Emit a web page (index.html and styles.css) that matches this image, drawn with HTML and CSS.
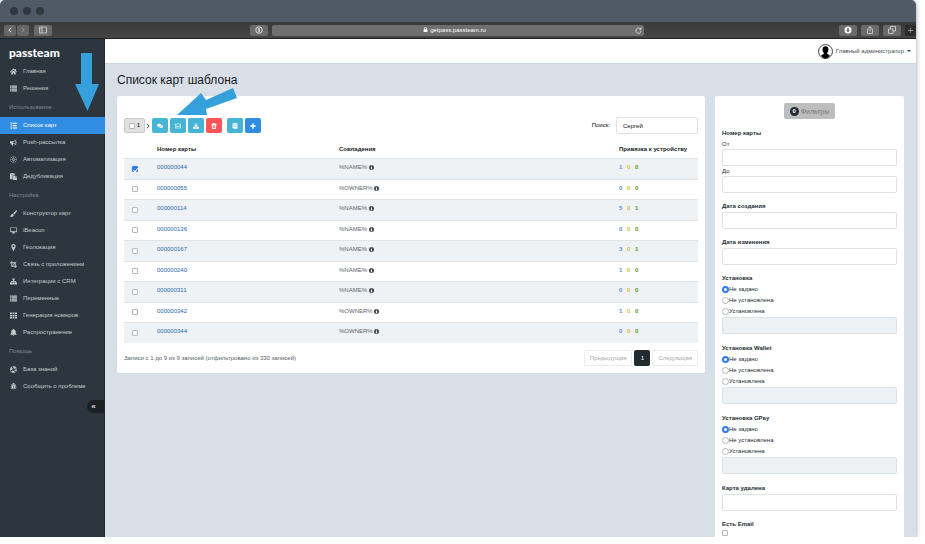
FILE: index.html
```html
<!DOCTYPE html>
<html lang="ru">
<head>
<meta charset="utf-8">
<title>Список карт шаблона</title>
<link rel="stylesheet" href="styles.css">
</head>
<body>
<svg class="sprite" aria-hidden="true">
  <symbol id="home" viewBox="0 0 16 16"><path d="M8 1 0 8.500 1.500 10 8 4l6.500 6L16 8.500l-2.500-2.500V2h-2v2zM8 5.500 3 10v5h4v-4h2v4h4v-5z"/></symbol>
  <symbol id="list" viewBox="0 0 16 16"><path d="M0 1h3v3H0zM4 1h12v3H4zM0 5h3v2.500H0zM4 5h12v2.500H4zM0 8.500h3V11H0zM4 8.500h12V11H4zM0 12h3v3H0zM4 12h12v3H4z"/></symbol>
  <symbol id="ordered" viewBox="0 0 16 16"><path d="M6 1.500h10v2.500H6zM6 7h10v2.500H6zM6 12.500h10V15H6zM2 0h1.500v4h1v1H1V4h1V2H1zM1 6h3v2L2.500 10H4v1H1v-1l2-2V7H1zM1 12h3v4H1v-1h2v-.5H2v-1h1V13H1z"/></symbol>
  <symbol id="horn" viewBox="0 0 16 16"><path fill-rule="evenodd" d="M0 5h6c3 0 6-2 8-4v5c2 0 2 3 0 3v5c-2-2-4-3.500-7-4-1 2 0 3 1 4-1 1-3 1-4 0-1-2-1-3-1-4H1L0 9zm7 1.500v2c2 .5 4 1.500 5.500 2.800v-7.500C11 5 9 6 7 6.500z"/></symbol>
  <symbol id="auto" viewBox="0 0 16 16"><g fill="none" stroke="currentColor"><circle cx="8" cy="8" r="7" stroke-dasharray="3 1"/><circle cx="8" cy="8" r="2"/><path d="M8 1v5M8 10v5M1 8h5M10 8h5M3 3l3.500 3.500M9.500 9.500 13 13M13 3 9.500 6.500M6.500 9.500 3 13"/></g></symbol>
  <symbol id="paste" viewBox="0 0 16 16"><path fill-rule="evenodd" d="M0 1h3l1-1h3l1 1h3v4H6v9H0zm3 1v1h5V2zM7 6h5v4h4v6H7zm6 0 3 3h-3z"/></symbol>
  <symbol id="brush" viewBox="0 0 16 16"><path d="M15.500.5c1 1 .5 2-.5 3.500L9.500 11 7 8.500 13 1.500c1-1 2-1.500 2.500-1zM6 9l2.500 2.500C9 14 6 16 3 16c-2 0-3-2-3-3 2 1 2 0 3-2s2-2 3-2z"/></symbol>
  <symbol id="monitor" viewBox="0 0 16 16"><path fill-rule="evenodd" d="M1 1h14l1 1v9l-1 1h-5l1 2v1H5v-1l1-2H1l-1-1V2zm.5 1.500v7h13v-7z"/></symbol>
  <symbol id="pin" viewBox="0 0 16 16"><path fill-rule="evenodd" d="M8 0c3 0 5 2 5 5 0 2-1 3-4 10.500H7C4 8 3 7 3 5c0-3 2-5 5-5zm0 3a2 2 0 1 0 0 4.500A2 2 0 0 0 8 3z"/></symbol>
  <symbol id="crop" viewBox="0 0 16 16"><path d="M3 0h2v3h7l2-2 1 1-2 2v7h3v2h-3v3h-2v-3H3V5H0V3h3zm2 5v5l5-5zm6 1-5 5h5z"/></symbol>
  <symbol id="sitemap" viewBox="0 0 16 16"><path d="M5.500 1h5v4H9v2h5v3h2v5h-5v-5h1.500V8.500H9V10h1.500v5h-5v-5H7V8.500H3.500V10H5v5H0v-5h2V7h5V5H5.500z"/></symbol>
  <symbol id="grid" viewBox="0 0 16 16"><path d="M0 1h4.500v3.500H0zM6 1h4v3.500H6zM11.500 1H16v3.500h-4.500zM0 6h4.500v3.500H0zM6 6h4v3.500H6zM11.500 6H16v3.500h-4.500zM0 11h4.500v4H0zM6 11h4v4H6zM11.500 11H16v4h-4.500z"/></symbol>
  <symbol id="bell" viewBox="0 0 16 16"><path d="M7 1V0h2v1c3 .5 4 2.500 4 5 0 4 1 5 3 7H0c2-2 3-3 3-7 0-2.500 1-4.500 4-5zM6 14h4c0 2.500-4 2.500-4 0z"/></symbol>
  <symbol id="ring" viewBox="0 0 16 16"><g fill="none" stroke="currentColor"><circle cx="8" cy="8" r="5.500" stroke-width="4" stroke-dasharray="5.600 3.040" stroke-dashoffset="2.800"/><circle cx="8" cy="8" r="7.300"/><circle cx="8" cy="8" r="3.500"/></g></symbol>
  <symbol id="bug" viewBox="0 0 16 16"><path d="M5 4c0-5 6-5 6 0zM3 3l2 2h6l2-2 1 1-2 2v2h3v1.500h-3l-.3 1.500L14 13l-1 1-2-2c-1 1.500-2 2-2.500 2V7h-1v7c-.5 0-1.500-.5-2.500-2l-2 2-1-1 2.300-2L4 9.500H1V8h3V6L2 4z"/></symbol>
  <symbol id="chat" viewBox="0 0 16 16"><path d="M6 2c3.500 0 6 1.800 6 4s-2.500 4-6 4l-1.500-.2L1.500 11l1-2C1 8.300 0 7.300 0 6c0-2.200 2.500-4 6-4zM13 5.500c4 1.500 4 5 1 6.500l1 2-3-1c-3 .3-5-.5-6-1.800 4 .3 7.500-2 7-5.700z"/></symbol>
  <symbol id="mail" viewBox="0 0 16 16"><path fill="none" stroke="currentColor" stroke-width="1.500" d="M1 2.500h14v11H1zM1 5l7 5 7-5M1 13l5-4M15 13l-5-4"/></symbol>
  <symbol id="load" viewBox="0 0 16 16"><path d="M6.500 1h3v5H13l-5 5-5-5h3.500zM0 10h4l2 2h4l2-2h4v5H0z"/></symbol>
  <symbol id="trash" viewBox="0 0 16 16"><path fill-rule="evenodd" d="M5 2 6 0h4l1 2h4v2h-1l-1 12H3L2 4H1V2zm0 4v7h1.500V6zm2.300 0v7h1.500V6zm2.300 0v7H11V6z"/></symbol>
  <symbol id="db" viewBox="0 0 16 16"><path d="M1 2c0-2.500 14-2.500 14 0v1.500C15 5 1 5 1 3.500zM1 5c3 1.500 11 1.500 14 0v3c-2 1.500-12 1.500-14 0zM1 9.500c3 1.500 11 1.500 14 0v4c0 3-14 3-14 0z"/></symbol>
  <symbol id="plus" viewBox="0 0 16 16"><path d="M6 1h4v5h5v4h-5v5H6v-5H1V6h5z"/></symbol>
  <symbol id="info" viewBox="0 0 16 16"><path fill-rule="evenodd" d="M8 0a8 8 0 1 1 0 16A8 8 0 0 1 8 0zM6.500 2.500v2.500h3V2.500zM5.500 6.500V8h1v4h-1v1.500h5V12h-1V6.500z"/></symbol>
  <symbol id="back" viewBox="0 0 16 16"><path fill="none" stroke="currentColor" stroke-width="2.500" d="M11 2 5 8l6 6"/></symbol>
  <symbol id="forward" viewBox="0 0 16 16"><path fill="none" stroke="currentColor" stroke-width="2.500" d="m5 2 6 6-6 6"/></symbol>
</svg>

<div class="window">
  <div class="titlebar"><i></i><i></i><i></i></div>
  <div class="toolbar">
    <div class="tool-left">
      <div class="history"><button aria-label="Назад"><svg><use href="#back"/></svg></button><button class="dim" aria-label="Вперёд"><svg><use href="#forward"/></svg></button></div>
      <button class="tool" aria-label="Боковая панель"><svg class="wide" viewBox="0 0 16 16"><path fill="none" stroke="currentColor" stroke-width="1.500" d="M1 2h14v12H1zM6 2v12M3 5h2M3 8h2"/></svg></button>
      <button class="tool push" aria-label="Пароли"><svg class="wide" viewBox="0 0 16 16"><circle cx="8" cy="8" r="6.500" fill="none" stroke="currentColor" stroke-width="2"/><path d="M6.500 4h3v8h-3z"/></svg></button>
    </div>
    <div class="address">
      <span><svg class="lock" viewBox="0 0 16 16"><path fill-rule="evenodd" d="M3 7V5c0-6 10-6 10 0v2h1v9H2V7zm2 0h6V5c0-3-6-3-6 0z"/></svg>getpass.passteam.ru</span>
      <svg class="reload" viewBox="0 0 16 16"><path fill="none" stroke="currentColor" stroke-width="1.500" d="M13 5a6 6 0 1 0 1 4M14 1v4h-4"/></svg>
    </div>
    <div class="tool-right">
      <button class="tool" aria-label="Загрузки"><svg class="wide" viewBox="0 0 16 16"><path fill="#fff" fill-rule="evenodd" d="M8 1a7 7 0 1 1 0 14A7 7 0 0 1 8 1zM6.500 4v4H4l4 5 4-5H9.500V4z"/></svg></button>
      <button class="tool" aria-label="Поделиться"><svg class="wide" viewBox="0 0 16 16"><path fill="none" stroke="currentColor" stroke-width="1.500" d="M6 6H3v9h10V6h-3M8 11V1M5 4l3-3 3 3"/></svg></button>
      <button class="tool" aria-label="Вкладки"><svg class="wide" viewBox="0 0 16 16"><path fill="none" stroke="currentColor" stroke-width="1.500" d="M1 6h9v9H1zM5 6V1h10v9h-5"/></svg></button>
      <button class="newtab" aria-label="Новая вкладка">+</button>
    </div>
  </div>

  <div class="app">
    <aside class="sidebar">
      <a class="logo" href="#">passteam</a>
      <nav>
        <a href="#"><svg><use href="#home"/></svg>Главная</a>
        <a href="#"><svg><use href="#list"/></svg>Решения</a>
        <h2>Использование</h2>
        <a class="active" href="#"><svg><use href="#ordered"/></svg>Список карт</a>
        <a href="#"><svg><use href="#horn"/></svg>Push-рассылка</a>
        <a href="#"><svg><use href="#auto"/></svg>Автоматизация</a>
        <a href="#"><svg><use href="#paste"/></svg>Дедубликация</a>
        <h2>Настройка</h2>
        <a href="#"><svg><use href="#brush"/></svg>Конструктор карт</a>
        <a href="#"><svg><use href="#monitor"/></svg>iBeacon</a>
        <a href="#"><svg><use href="#pin"/></svg>Геолокация</a>
        <a href="#"><svg><use href="#crop"/></svg>Связь с приложением</a>
        <a href="#"><svg><use href="#sitemap"/></svg>Интеграции с CRM</a>
        <a href="#"><svg><use href="#list"/></svg>Переменные</a>
        <a href="#"><svg><use href="#grid"/></svg>Генерация номеров</a>
        <a href="#"><svg><use href="#bell"/></svg>Распространение</a>
        <h2>Помощь</h2>
        <a href="#"><svg><use href="#ring"/></svg>База знаний</a>
        <a href="#"><svg><use href="#bug"/></svg>Сообщить о проблеме</a>
      </nav>
      <button class="collapse" aria-label="Свернуть меню">«</button>
    </aside>

    <div class="main">
      <header class="topbar">
        <a class="user" href="#">
          <svg class="avatar" viewBox="0 0 28 28"><circle cx="14" cy="14" r="13" fill="#fff" stroke="#111" stroke-width="1.500"/><path d="M14 4c4 0 6 3 5.500 7 0 3-1.500 4-2.500 6 0 2 1 2.500 5 4-2 4-5 6-8 6s-6-2-8-6c4-1.500 5-2 5-4-1-2-2.500-3-2.500-6C8 7 10 4 14 4z"/></svg>
          Главный администратор<i class="caret"></i>
        </a>
      </header>
      <h1>Список карт шаблона</h1>
      <div class="columns">
        <section class="panel cards">
          <div class="actions">
            <label class="picked"><input type="checkbox">1</label>
            <svg class="chevron"><use href="#forward"/></svg>
            <div class="buttons">
              <button aria-label="Сообщение"><svg><use href="#chat"/></svg></button>
              <button aria-label="Письмо"><svg><use href="#mail"/></svg></button>
              <button aria-label="Скачать"><svg><use href="#load"/></svg></button>
              <button class="danger" aria-label="Удалить"><svg><use href="#trash"/></svg></button>
            </div>
            <div class="buttons">
              <button aria-label="Данные"><svg><use href="#db"/></svg></button>
              <button class="primary" aria-label="Добавить"><svg><use href="#plus"/></svg></button>
            </div>
            <label class="search">Поиск:<input type="text" value="Сергей"></label>
          </div>
          <table>
            <colgroup><col class="c-check"><col class="c-number"><col><col class="c-device"></colgroup>
            <thead><tr><th></th><th>Номер карты</th><th>Совпадения</th><th>Привязка к устройству</th></tr></thead>
            <tbody>
              <tr><td><input type="checkbox" aria-label="000000044" checked></td><td><a href="#">000000044</a></td><td>%NAME% <svg><use href="#info"/></svg></td><td><b>1</b><b>0</b><b>0</b></td></tr>
              <tr><td><input type="checkbox" aria-label="000000055"></td><td><a href="#">000000055</a></td><td>%OWNER% <svg><use href="#info"/></svg></td><td><b>0</b><b>0</b><b>0</b></td></tr>
              <tr><td><input type="checkbox" aria-label="000000114"></td><td><a href="#">000000114</a></td><td>%NAME% <svg><use href="#info"/></svg></td><td><b>5</b><b>0</b><b>1</b></td></tr>
              <tr><td><input type="checkbox" aria-label="000000136"></td><td><a href="#">000000136</a></td><td>%NAME% <svg><use href="#info"/></svg></td><td><b>0</b><b>0</b><b>0</b></td></tr>
              <tr><td><input type="checkbox" aria-label="000000167"></td><td><a href="#">000000167</a></td><td>%NAME% <svg><use href="#info"/></svg></td><td><b>3</b><b>0</b><b>1</b></td></tr>
              <tr><td><input type="checkbox" aria-label="000000240"></td><td><a href="#">000000240</a></td><td>%NAME% <svg><use href="#info"/></svg></td><td><b>1</b><b>0</b><b>0</b></td></tr>
              <tr><td><input type="checkbox" aria-label="000000311"></td><td><a href="#">000000311</a></td><td>%NAME% <svg><use href="#info"/></svg></td><td><b>0</b><b>0</b><b>0</b></td></tr>
              <tr><td><input type="checkbox" aria-label="000000342"></td><td><a href="#">000000342</a></td><td>%OWNER% <svg><use href="#info"/></svg></td><td><b>1</b><b>0</b><b>0</b></td></tr>
              <tr><td><input type="checkbox" aria-label="000000344"></td><td><a href="#">000000344</a></td><td>%OWNER% <svg><use href="#info"/></svg></td><td><b>0</b><b>0</b><b>0</b></td></tr>
            </tbody>
          </table>
          <div class="summary">
            <span>Записи с 1 до 9 из 9 записей (отфильтровано из 330 записей)</span>
            <div class="pages"><button>Предыдущая</button><button class="current">1</button><button>Следующая</button></div>
          </div>
        </section>

        <form class="panel filters">
          <button type="button" class="apply"><span>0</span>Фильтры</button>
          <fieldset>
            <legend>Номер карты</legend>
            <label for="from">От</label><input type="text" id="from">
            <label for="to">До</label><input type="text" id="to">
          </fieldset>
          <div class="field"><label for="created">Дата создания</label><input type="text" id="created"></div>
          <div class="field"><label for="changed">Дата изменения</label><input type="text" id="changed"></div>
          <fieldset class="state">
            <legend>Установка</legend>
            <label><input type="radio" name="install" checked>Не задано</label>
            <label><input type="radio" name="install">Не установлена</label>
            <label><input type="radio" name="install">Установлена</label>
            <input type="text" aria-label="Дата установки" disabled>
          </fieldset>
          <fieldset class="state">
            <legend>Установка Wallet</legend>
            <label><input type="radio" name="wallet" checked>Не задано</label>
            <label><input type="radio" name="wallet">Не установлена</label>
            <label><input type="radio" name="wallet">Установлена</label>
            <input type="text" aria-label="Дата установки Wallet" disabled>
          </fieldset>
          <fieldset class="state">
            <legend>Установка GPay</legend>
            <label><input type="radio" name="gpay" checked>Не задано</label>
            <label><input type="radio" name="gpay">Не установлена</label>
            <label><input type="radio" name="gpay">Установлена</label>
            <input type="text" aria-label="Дата установки GPay" disabled>
          </fieldset>
          <div class="field"><label for="removed">Карта удалена</label><input type="text" id="removed"></div>
          <div class="field"><label for="email">Есть Email</label><input type="checkbox" id="email"></div>
        </form>
      </div>
    </div>
  </div>
  <svg class="pointer down" viewBox="0 0 24 58"><path d="M6 0h11v31h7L12.500 58 0 31h6z"/></svg>
  <svg class="pointer left" viewBox="0 0 60 28"><path d="M0 27 24 5l5 7L56 0l4 10-31 11 1 6z"/></svg>
</div>
</body>
</html>
```
FILE: styles.css
```css
* { box-sizing: border-box; }
body { margin: 0; overflow: hidden; background: #fff; font: 6px/11px "Liberation Sans", Arial, sans-serif; color: #343c44; }
button, input { font: inherit; color: inherit; margin: 0; padding: 0; border: 0; }
a { color: inherit; text-decoration: none; }
svg { width: 6px; height: 6px; flex: none; fill: currentColor; }
.sprite { display: none; }

.window { position: relative; display: flex; flex-direction: column; height: calc(100vh - 7px); margin-right: 9px; overflow: clip; border-radius: 5px 5px 0 0; background: #d9dfe7; box-shadow: 0 1px 5px rgba(0, 0, 0, .4); }
.titlebar { display: flex; gap: 5px; align-items: center; height: 22px; padding-left: 10px; flex: none; background: #505966; }
.titlebar i { width: 8px; height: 8px; border-radius: 50%; background: #2f3741; }
.toolbar { display: flex; align-items: center; height: 17px; flex: none; background: linear-gradient(#3a3a3b, #454546); border-bottom: 1px solid #222; color: #d8d8d8; }
.tool-left { display: flex; width: 268px; padding-left: 4px; gap: 5px; }
.history { display: flex; gap: 1px; }
.toolbar button { display: flex; align-items: center; justify-content: center; width: 18px; height: 11px; border-radius: 2px; background: #6a6a6b; color: #ddd; }
.toolbar .history button { width: 12px; background: #666667; color: #fff; }
.toolbar .history .dim { color: #999; }
.toolbar .push { margin-left: auto; }
.wide { width: 8px; height: 8px; }
.address { display: flex; align-items: center; flex: 0 0 372px; height: 11px; margin-left: 4px; padding: 0 2px; border-radius: 2px; background: #6f6f70; color: #fff; }
.address span { flex: 1; text-align: center; }
.lock { width: 5px; height: 5px; margin-right: 2px; }
.reload { width: 7px; height: 7px; }
.tool-right { display: flex; align-items: center; flex: 1; gap: 4px; justify-content: flex-end; }
.toolbar .newtab { align-self: flex-end; width: 11px; height: 11px; border-radius: 0; background: #2b2b2c; color: #999; font-size: 10px; }

.app { display: flex; flex: 1; min-height: 0; }
.sidebar { display: flex; flex-direction: column; flex: 0 0 105px; background: #2d363e; border-right: 1px solid #222a31; color: #c5cacd; }
.logo { height: 24px; padding: 2px 0 0 9px; color: #fff; font: 900 12px/23px Lato, sans-serif; }
.sidebar nav a { display: flex; align-items: center; gap: 6px; height: 17px; padding-left: 10px; }
.sidebar nav svg { width: 7px; height: 7px; }
.sidebar nav .active { background: #318de3; color: #fff; margin-right: -1px; }
.sidebar h2 { margin: 0; padding-left: 9px; font-size: 6px; font-weight: 400; line-height: 20px; color: #7e8890; }
.collapse { align-self: flex-end; width: 17px; height: 13px; margin-top: 5px; padding-right: 4px; border-radius: 7px 0 0 7px; background: #1b2025; color: #ddd; font-size: 8px; font-weight: 700; line-height: 11px; }

.main { flex: 1; min-width: 0; background: #d9dfe7; }
.topbar { display: flex; justify-content: flex-end; height: 25px; padding-right: 5px; background: #fff; border-bottom: 1px solid #cfd5dc; }
.user { display: flex; align-items: center; gap: 3px; color: #454b55; }
.avatar { width: 15px; height: 15px; fill: #000; }
.caret { border: 2px solid transparent; border-top-color: #333b48; border-bottom: 0; }
h1 { margin: 0; padding: 8px 12px; font-size: 12px; font-weight: 400; line-height: 16px; color: #161c24; -webkit-text-stroke: thin; -webkit-text-stroke-width: 0; }
.columns { display: flex; align-items: flex-start; gap: 10px; padding: 0 12px; }
.panel { background: #fff; border-radius: 2px; }
.cards { flex: 1; min-width: 0; padding: 21px 7px 7px; }

.actions { display: flex; align-items: center; height: 17px; }
.picked { display: flex; align-items: center; justify-content: center; gap: 2px; width: 21px; height: 15px; border: 1px solid #ccc; border-radius: 2px; background: #e1e1e1; font-weight: 700; }
.chevron { margin-right: 1px; }
.buttons { display: flex; gap: 2px; margin-right: 5px; }
.buttons button { display: flex; align-items: center; justify-content: center; width: 16px; height: 15px; border-radius: 2px; background: #46b4d5; color: #fff; }
.buttons .danger { background: #fb5557; }
.buttons .primary { background: #318de3; }
.search { display: flex; align-items: center; gap: 6px; margin-left: auto; color: #111; }
.search input { width: 82px; padding: 0 6px; }
input[type="text"] { height: 17px; border: 1px solid #dfe2e5; border-radius: 2px; background: #fff; }
input[type="text"]:disabled { background: #edf1f4; }
input[type="checkbox"] { appearance: none; display: block; width: 6px; height: 6px; border: 1px solid #b5b8bb; border-radius: 1px; background: #fff; }
input[type="checkbox"]:checked { border-color: #2c7cf6; background: #2c7cf6; }
input[type="checkbox"]:checked::after { content: ""; display: block; width: 2px; height: 4px; margin-left: 1px; border: solid #fff; border-width: 0 1px 1px 0; transform: rotate(40deg); }

table { width: 100%; margin-top: 7px; border-collapse: collapse; table-layout: fixed; color: #5b6269; }
.c-check { width: 33px; }
.c-number { width: 182px; }
.c-device { width: 79px; }
th { height: 17px; padding: 0; text-align: left; color: #222; white-space: nowrap; }
td { height: 20px; padding: 0 0 2px; border-top: 1px solid #e1e5e8; }
tr:nth-child(odd) td { height: 21px; background: #eff2f5; }
td input { margin: 2px 0 0 8px; }
td a { color: #2468a8; }
td svg { width: 5px; height: 5px; vertical-align: -1px; color: #3d444b; }
td b { display: inline-block; width: 8px; color: #5c8ee2; }
td b:nth-child(2) { color: #d4c23c; }
td b:nth-child(3) { color: #549a2a; }
.summary { display: flex; align-items: center; justify-content: space-between; margin-top: 7px; color: #555b62; }
.pages { display: flex; gap: 2px; }
.pages button { height: 16px; padding: 0 5px; border: 1px solid #eaecee; border-radius: 2px; background: #fff; color: #aaa; }
.pages .current { width: 16px; border: 0; background: #222a32; color: #fff; }

.filters { display: flex; flex-direction: column; flex: 0 0 189px; padding: 7px; color: #262d35; }
.apply { display: flex; align-items: center; justify-content: center; align-self: center; gap: 2px; width: 51px; height: 16px; margin-bottom: 8px; border-radius: 2px; background: #bdbdbd; color: #73777b; font-size: 7px; }
.apply span { width: 9px; height: 9px; border-radius: 5px; background: #222b33; color: #fff; font-size: 6px; font-weight: 700; line-height: 9px; }
fieldset { min-width: 0; margin: 0 0 7px; padding: 0; border: 0; }
.state { margin-bottom: 8px; }
legend, .field label { display: block; padding: 0; font-weight: 700; line-height: 12px; }
fieldset label { display: block; line-height: 10px; }
.state label { display: flex; align-items: center; line-height: 11px; }
.filters input[type="text"] { display: block; width: 100%; }
.field { margin-bottom: 7px; }
input[type="radio"] { appearance: none; width: 7px; height: 7px; border: 1px solid #b5b8bb; border-radius: 50%; background: #fff; }
input[type="radio"]:checked { border: 2px solid #2c7cf6; }

.pointer { position: absolute; fill: #36a0dc; }
.down { left: 75px; top: 53px; width: 24px; height: 58px; }
.left { left: 177px; top: 88px; width: 60px; height: 28px; }
```
